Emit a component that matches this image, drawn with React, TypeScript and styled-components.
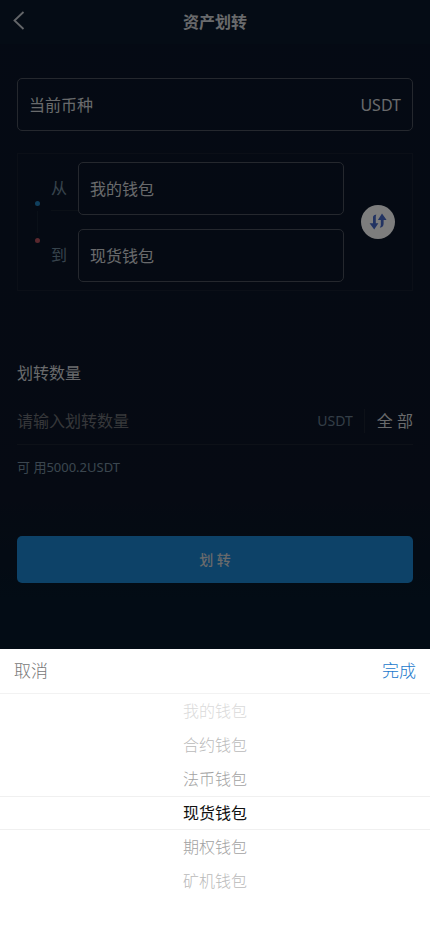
import React, { useState } from 'react';
import styled, { createGlobalStyle } from 'styled-components';

const GlobalStyle = createGlobalStyle`
  *, *::before, *::after { box-sizing: border-box; }
  html, body { margin: 0; background: #0b1526; }
  body, button, input {
    font-family: "Noto Sans", "Noto Sans CJK SC", sans-serif;
    font-size: 16px;
    line-height: 24px;
  }
  button {
    margin: 0;
    padding: 0;
    border: 0;
    background: none;
    color: inherit;
    cursor: pointer;
  }
`;

const Page = styled.div`
  min-height: 100vh;
  background: linear-gradient(#0a1528 0, #0c1526 500px, #06182a 600px, #06182a 100%);
  color: #d2d5d8;
`;

const Header = styled.header`
  display: grid;
  grid-template-columns: 48px 1fr 48px;
  align-items: center;
  height: 44px;
  background: #0b192a;
`;

const BackButton = styled.button`
  display: flex;
  padding: 0 0 4px 12px;
`;

const Title = styled.h1`
  margin: 0;
  font-size: 16px;
  font-weight: 600;
  text-align: center;
`;

const Content = styled.main`
  display: flex;
  flex-direction: column;
  padding: 34px 17px 0;
`;

const SelectBox = styled.button`
  display: flex;
  flex: 1;
  align-items: center;
  justify-content: space-between;
  min-width: 0;
  height: 53px;
  padding: 0 11px;
  border: 1px solid #4a505c;
  border-radius: 5px;
`;

const Currency = styled.div`
  display: flex;
`;

const TransferPanel = styled.section`
  display: flex;
  align-items: center;
  gap: 17px;
  margin-top: 22px;
  padding: 8px 17px;
  border: 1px solid #171f2f;
`;

const Route = styled.div`
  display: flex;
  flex-direction: column;
  align-items: center;
  gap: 5px;
  width: 5px;
  margin-right: -6px;
`;

const Dot = styled.span<{ $color: string }>`
  width: 5px;
  height: 5px;
  border-radius: 50%;
  background: ${(p) => p.$color};
`;

const RouteLine = styled.span`
  width: 1px;
  height: 22px;
  background: #152030;
`;

const Wallets = styled.div`
  display: flex;
  flex: 1;
  flex-direction: column;
  gap: 14px;
  min-width: 0;
`;

const WalletRow = styled.div`
  display: flex;
`;

const WalletLabel = styled.span<{ $ruled?: boolean }>`
  width: 27px;
  line-height: 53px;
  color: #6e8799;
  background: ${(p) =>
    p.$ruled ? 'linear-gradient(#16202f, #16202f) 0 48px / 100% 1px no-repeat' : 'none'};
`;

const SwapButton = styled.button`
  display: flex;
  align-items: center;
  justify-content: center;
  width: 34px;
  height: 34px;
  border-radius: 50%;
  background: #fafafa;
`;

const AmountLabel = styled.label`
  margin-top: 70px;
`;

const AmountRow = styled.div`
  display: flex;
  align-items: center;
  height: 48px;
  margin-top: 12px;
  border-bottom: 1px solid #1a2231;
`;

const AmountInput = styled.input`
  flex: 1;
  min-width: 0;
  padding: 0;
  border: 0;
  outline: 0;
  background: none;
  color: #d2d5d8;
  &::placeholder { color: #6c6f74; opacity: 1; }
`;

const Unit = styled.span`
  padding-right: 11px;
  border-right: 1px solid #1a2231;
  font-size: 14px;
  color: #687c8e;
`;

const AllButton = styled.button`
  padding-left: 12px;
`;

const Available = styled.p`
  margin: 12px 0 0;
  font-size: 13px;
  line-height: 20px;
  color: #768d9f;
`;

const SubmitButton = styled.button`
  height: 47px;
  margin-top: 59px;
  border-radius: 5px;
  background: #1a84d0;
  font-size: 14px;
  font-weight: 500;
`;

const Backdrop = styled.div`
  position: fixed;
  inset: 0;
  background: rgba(0, 0, 0, 0.5);
`;

const Sheet = styled.section`
  position: fixed;
  right: 0;
  bottom: 0;
  left: 0;
  background: #fff;
`;

const SheetToolbar = styled.div`
  display: flex;
  align-items: stretch;
  justify-content: space-between;
  height: 45px;
  border-bottom: 1px solid #f2f2f2;
`;

const SheetAction = styled.button<{ $primary?: boolean }>`
  padding: 0 14px;
  font-size: 17px;
  font-weight: 300;
  color: ${(p) => (p.$primary ? '#1b78cc' : '#777')};
`;

const OptionList = styled.div`
  display: flex;
  flex-direction: column;
  padding-bottom: 34px;
`;

const Option = styled.button<{ $color: string; $selected: boolean }>`
  height: 34px;
  border: solid ${(p) => (p.$selected ? '#f0f0f0' : 'transparent')};
  border-width: 1px 0;
  font-weight: ${(p) => (p.$selected ? 400 : 300)};
  line-height: 32px;
  color: ${(p) => p.$color};
`;

const wallets = ['我的钱包', '合约钱包', '法币钱包', '现货钱包', '期权钱包', '矿机钱包'];
const fade = ['#111', '#a2a2a2', '#bababa', '#dadada'];

export default function App() {
  const [from, setFrom] = useState(0);
  const [to, setTo] = useState(3);
  const [open, setOpen] = useState(true);

  const swap = () => {
    setFrom(to);
    setTo(from);
  };

  return (
    <>
      <GlobalStyle />
      <Page>
        <Header>
          <BackButton type="button" aria-label="返回">
            <svg width="14" height="20" viewBox="0 0 14 20" fill="none" stroke="#c8ccd2" strokeWidth="1.8">
              <path d="M11.500 2 2.500 10.500l9 8.500" />
            </svg>
          </BackButton>
          <Title>资产划转</Title>
        </Header>
        <Content>
          <Currency>
            <SelectBox type="button">
              <span>当前币种</span>
              <span>USDT</span>
            </SelectBox>
          </Currency>
          <TransferPanel>
            <Route>
              <Dot $color="#2180bd" />
              <RouteLine />
              <Dot $color="#b4505c" />
            </Route>
            <Wallets>
              <WalletRow>
                <WalletLabel id="from-label" $ruled>从</WalletLabel>
                <SelectBox type="button" aria-describedby="from-label">{wallets[from]}</SelectBox>
              </WalletRow>
              <WalletRow>
                <WalletLabel id="to-label">到</WalletLabel>
                <SelectBox type="button" aria-describedby="to-label" onClick={() => setOpen(true)}>
                  {wallets[to]}
                </SelectBox>
              </WalletRow>
            </Wallets>
            <SwapButton type="button" aria-label="互换" onClick={swap}>
              <svg width="18" height="18" viewBox="0 0 18 18">
                <path
                  fill="#4467c4"
                  d="M4 3.800Q4.400 1.800 7.300 1.400L6.800 3.500V10.300H9.400L5.200 16.500.6 10.300H4zM13 .6 17.600 7H14.600V10.800Q14.600 14.300 10.800 14.800L11.800 12.500V7H8.900z"
                />
              </svg>
            </SwapButton>
          </TransferPanel>
          <AmountLabel htmlFor="amount">划转数量</AmountLabel>
          <AmountRow>
            <AmountInput id="amount" placeholder="请输入划转数量" inputMode="decimal" />
            <Unit>USDT</Unit>
            <AllButton type="button">全 部</AllButton>
          </AmountRow>
          <Available>可 用5000.2USDT</Available>
          <SubmitButton type="button">划 转</SubmitButton>
        </Content>
      </Page>
      {open && (
        <>
          <Backdrop onClick={() => setOpen(false)} />
          <Sheet role="dialog" aria-label="选择钱包">
            <SheetToolbar>
              <SheetAction type="button" onClick={() => setOpen(false)}>取消</SheetAction>
              <SheetAction type="button" $primary onClick={() => setOpen(false)}>完成</SheetAction>
            </SheetToolbar>
            <OptionList role="listbox" aria-label="钱包">
              {wallets.map((name, i) => (
                <Option
                  key={name}
                  type="button"
                  role="option"
                  aria-selected={i === to}
                  $selected={i === to}
                  $color={fade[Math.min(Math.abs(i - to), 3)]}
                  onClick={() => setTo(i)}
                >
                  {name}
                </Option>
              ))}
            </OptionList>
          </Sheet>
        </>
      )}
    </>
  );
}
